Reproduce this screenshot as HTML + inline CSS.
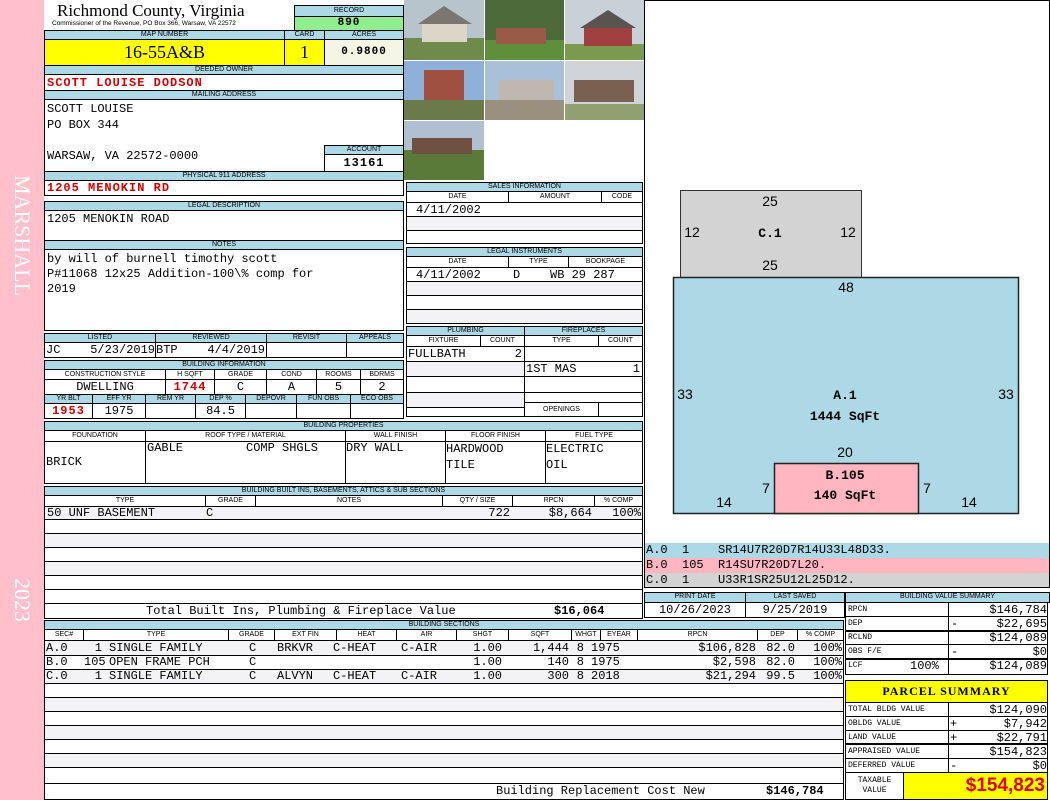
<!DOCTYPE html>
<html><head><meta charset="utf-8"><style>
*{margin:0;padding:0;box-sizing:border-box}
body{width:1050px;height:800px;position:relative;overflow:hidden;background:#fff;font-family:"Liberation Mono",monospace;font-size:12px;color:#000}
.a{position:absolute}
.b{position:absolute;border:1px solid #000}
.h{position:absolute;background:#add8e6;border:1px solid #000;font-family:"Liberation Sans",sans-serif;font-size:7px;text-align:center;line-height:8px;overflow:hidden;white-space:nowrap}
.s{position:absolute;background:#fff;border:1px solid #000;font-family:"Liberation Sans",sans-serif;font-size:7px;text-align:center;line-height:9px;overflow:hidden;white-space:nowrap}
.v{position:absolute;font-family:"Liberation Mono",monospace;font-size:12px;white-space:pre;line-height:14px;overflow:hidden}
.r{color:#d00000;font-weight:bold;letter-spacing:1px}
.g{background:#f3f3f5}
.t{position:absolute;font-size:12px;white-space:pre;line-height:14px;text-align:right}
.l{position:absolute;font-size:12px;white-space:pre;line-height:14px}
</style></head><body>
<div class="a" style="left:0;top:0;width:44px;height:800px;background:#ffc0cb"></div>
<div class="a" style="left:8px;top:175px;width:28px;height:160px;color:#fff;font-family:'Liberation Serif',serif;font-size:22px;writing-mode:vertical-rl;line-height:28px">MARSHALL</div>
<div class="a" style="left:8px;top:578px;width:28px;height:60px;color:#fff;font-family:'Liberation Serif',serif;font-size:22px;writing-mode:vertical-rl;line-height:28px">2023</div>

<div class="a" style="left:57px;top:1px;font-family:'Liberation Serif',serif;font-size:17px;line-height:20px">Richmond County, Virginia</div>
<div class="a" style="left:52px;top:20px;font-family:'Liberation Sans',sans-serif;font-size:6.5px;line-height:8px;white-space:nowrap">Commissioner of the Revenue, PO Box 366, Warsaw, VA 22572</div>
<div class="h" style="left:294px;top:5px;width:110px;height:12px;line-height:10px">RECORD</div>
<div class="a" style="left:294px;top:16px;width:110px;height:15px;background:#90ee90;border:1px solid #000;text-align:center;font-weight:bold;font-size:11px;line-height:13px;letter-spacing:1px">890</div>

<div class="h" style="left:44px;top:30px;width:241px;height:10px">MAP NUMBER</div>
<div class="h" style="left:284px;top:30px;width:41px;height:10px">CARD</div>
<div class="h" style="left:324px;top:30px;width:80px;height:10px">ACRES</div>
<div class="a" style="left:44px;top:39px;width:241px;height:27px;background:#ffff00;border:1px solid #000;text-align:center;font-family:'Liberation Serif',serif;font-size:18px;line-height:25px">16-55A&amp;B</div>
<div class="a" style="left:284px;top:39px;width:41px;height:27px;background:#ffff00;border:1px solid #000;text-align:center;font-family:'Liberation Serif',serif;font-size:18px;line-height:25px">1</div>
<div class="a" style="left:324px;top:39px;width:80px;height:27px;background:#f5f5e6;border:1px solid #000;text-align:center;font-weight:bold;font-size:11px;line-height:25px;letter-spacing:1px">0.9800</div>

<div class="h" style="left:44px;top:65px;width:360px;height:10px">DEEDED OWNER</div>
<div class="b" style="left:44px;top:74px;width:360px;height:17px"></div>
<div class="v r" style="left:47px;top:76px">SCOTT LOUISE DODSON</div>
<div class="h" style="left:44px;top:90px;width:360px;height:10px">MAILING ADDRESS</div>
<div class="b" style="left:44px;top:99px;width:360px;height:73px"></div>
<div class="v" style="left:47px;top:102px;line-height:15.5px">SCOTT LOUISE
PO BOX 344

WARSAW, VA 22572-0000</div>
<div class="h" style="left:324px;top:145px;width:80px;height:10px">ACCOUNT</div>
<div class="b" style="left:324px;top:154px;width:80px;height:18px;text-align:center;font-weight:bold;line-height:16px;letter-spacing:1px">13161</div>
<div class="h" style="left:44px;top:171px;width:360px;height:10px">PHYSICAL 911 ADDRESS</div>
<div class="b" style="left:44px;top:180px;width:360px;height:16px"></div>
<div class="v r" style="left:47px;top:181px">1205 MENOKIN RD</div>

<div class="h" style="left:44px;top:201px;width:360px;height:10px">LEGAL DESCRIPTION</div>
<div class="b" style="left:44px;top:210px;width:360px;height:31px"></div>
<div class="v" style="left:47px;top:212px">1205 MENOKIN ROAD</div>
<div class="h" style="left:44px;top:240px;width:360px;height:10px">NOTES</div>
<div class="b" style="left:44px;top:249px;width:360px;height:82px"></div>
<div class="v" style="left:47px;top:252px;line-height:15px">by will of burnell timothy scott
P#11068 12x25 Addition-100\% comp for
2019</div>

<div class="h" style="left:44px;top:333px;width:112px;height:10px">LISTED</div>
<div class="h" style="left:155px;top:333px;width:112px;height:10px">REVIEWED</div>
<div class="h" style="left:266px;top:333px;width:81px;height:10px">REVISIT</div>
<div class="h" style="left:346px;top:333px;width:58px;height:10px">APPEALS</div>
<div class="b" style="left:44px;top:342px;width:112px;height:16px"></div>
<div class="b" style="left:155px;top:342px;width:112px;height:16px"></div>
<div class="b" style="left:266px;top:342px;width:81px;height:16px"></div>
<div class="b" style="left:346px;top:342px;width:58px;height:16px"></div>
<div class="v" style="left:46px;top:343px">JC</div><div class="t" style="left:60px;top:343px;width:95px">5/23/2019</div>
<div class="v" style="left:156px;top:343px">BTP</div><div class="t" style="left:190px;top:343px;width:75px">4/4/2019</div>

<div class="h" style="left:44px;top:360px;width:360px;height:10px">BUILDING INFORMATION</div>
<div class="s" style="left:44px;top:369px;width:122px;height:11px">CONSTRUCTION STYLE</div>
<div class="s" style="left:165px;top:369px;width:50px;height:11px">H SQFT</div>
<div class="s" style="left:214px;top:369px;width:53px;height:11px">GRADE</div>
<div class="s" style="left:266px;top:369px;width:51px;height:11px">COND</div>
<div class="s" style="left:316px;top:369px;width:45px;height:11px">ROOMS</div>
<div class="s" style="left:360px;top:369px;width:44px;height:11px">BDRMS</div>
<div class="b" style="left:44px;top:379px;width:122px;height:16px;text-align:center;line-height:14px">DWELLING</div>
<div class="b r" style="left:165px;top:379px;width:50px;height:16px;text-align:center;line-height:14px">1744</div>
<div class="b" style="left:214px;top:379px;width:53px;height:16px;text-align:center;line-height:14px">C</div>
<div class="b" style="left:266px;top:379px;width:51px;height:16px;text-align:center;line-height:14px">A</div>
<div class="b" style="left:316px;top:379px;width:45px;height:16px;text-align:center;line-height:14px">5</div>
<div class="b" style="left:360px;top:379px;width:44px;height:16px;text-align:center;line-height:14px">2</div>
<div class="h" style="left:44px;top:394px;width:49px;height:10px">YR BLT</div>
<div class="h" style="left:92px;top:394px;width:54px;height:10px">EFF YR</div>
<div class="h" style="left:145px;top:394px;width:51px;height:10px">REM YR</div>
<div class="h" style="left:195px;top:394px;width:51px;height:10px">DEP %</div>
<div class="h" style="left:245px;top:394px;width:52px;height:10px">DEPOVR</div>
<div class="h" style="left:296px;top:394px;width:55px;height:10px">FUN OBS</div>
<div class="h" style="left:350px;top:394px;width:54px;height:10px">ECO OBS</div>
<div class="b r" style="left:44px;top:403px;width:49px;height:16px;text-align:center;line-height:14px">1953</div>
<div class="b" style="left:92px;top:403px;width:54px;height:16px;text-align:center;line-height:14px">1975</div>
<div class="b" style="left:145px;top:403px;width:51px;height:16px"></div>
<div class="b" style="left:195px;top:403px;width:51px;height:16px;text-align:center;line-height:14px">84.5</div>
<div class="b" style="left:245px;top:403px;width:52px;height:16px"></div>
<div class="b" style="left:296px;top:403px;width:55px;height:16px"></div>
<div class="b" style="left:350px;top:403px;width:54px;height:16px"></div>

<svg class="a" style="left:404px;top:0" width="240" height="180">
<rect x="0" y="0" width="80" height="60" fill="#b8c4cc"/><rect x="0" y="38" width="80" height="22" fill="#6f8a4a"/><rect x="18" y="22" width="45" height="20" fill="#ddd6c8"/><polygon points="14,24 40,6 68,24" fill="#7c7670"/>
<rect x="81" y="0" width="79" height="60" fill="#4c6a3a"/><rect x="81" y="40" width="79" height="20" fill="#5f8f3a"/><rect x="92" y="28" width="50" height="16" fill="#9a5a48"/>
<rect x="161" y="0" width="79" height="60" fill="#c8d0d8"/><rect x="161" y="44" width="79" height="16" fill="#7a9a50"/><rect x="180" y="26" width="48" height="20" fill="#a04040"/><polygon points="176,28 204,10 232,28" fill="#5a5450"/>
<rect x="0" y="61" width="80" height="59" fill="#8fb0d8"/><rect x="20" y="70" width="40" height="40" fill="#a05040"/><rect x="0" y="100" width="80" height="20" fill="#6a7a4a"/>
<rect x="81" y="61" width="79" height="59" fill="#a8c0d8"/><rect x="95" y="80" width="55" height="20" fill="#c0b8b0"/><rect x="81" y="100" width="79" height="20" fill="#9a9080"/>
<rect x="161" y="61" width="79" height="59" fill="#d0d4d8"/><rect x="170" y="80" width="60" height="22" fill="#7a6050"/><rect x="161" y="104" width="79" height="16" fill="#90a070"/>
<rect x="0" y="121" width="80" height="59" fill="#b0c0d0"/><rect x="0" y="150" width="80" height="30" fill="#5a7a3a"/><rect x="8" y="138" width="60" height="16" fill="#705040"/>
</svg>

<div class="h" style="left:406px;top:182px;width:237px;height:10px">SALES INFORMATION</div>
<div class="s" style="left:406px;top:191px;width:103px;height:12px">DATE</div>
<div class="s" style="left:508px;top:191px;width:94px;height:12px">AMOUNT</div>
<div class="s" style="left:601px;top:191px;width:42px;height:12px">CODE</div>
<div class="b" style="left:406px;top:202px;width:237px;height:15px"></div>
<div class="b g" style="left:406px;top:216px;width:237px;height:15px"></div>
<div class="b" style="left:406px;top:230px;width:237px;height:14px"></div>
<div class="v" style="left:416px;top:203px">4/11/2002</div>

<div class="h" style="left:406px;top:247px;width:237px;height:10px">LEGAL INSTRUMENTS</div>
<div class="s" style="left:406px;top:256px;width:103px;height:12px">DATE</div>
<div class="s" style="left:508px;top:256px;width:61px;height:12px">TYPE</div>
<div class="s" style="left:568px;top:256px;width:75px;height:12px">BOOKPAGE</div>
<div class="b" style="left:406px;top:267px;width:237px;height:15px"></div>
<div class="b g" style="left:406px;top:281px;width:237px;height:15px"></div>
<div class="b" style="left:406px;top:295px;width:237px;height:15px"></div>
<div class="b g" style="left:406px;top:309px;width:237px;height:15px"></div>
<div class="v" style="left:416px;top:268px">4/11/2002</div><div class="v" style="left:513px;top:268px">D</div><div class="v" style="left:550px;top:268px">WB 29 287</div>

<div class="h" style="left:406px;top:326px;width:119px;height:10px">PLUMBING</div>
<div class="h" style="left:524px;top:326px;width:119px;height:10px">FIREPLACES</div>
<div class="s" style="left:406px;top:335px;width:75px;height:12px">FIXTURE</div>
<div class="s" style="left:480px;top:335px;width:45px;height:12px">COUNT</div>
<div class="s" style="left:524px;top:335px;width:75px;height:12px">TYPE</div>
<div class="s" style="left:598px;top:335px;width:45px;height:12px">COUNT</div>
<div class="b" style="left:406px;top:346px;width:119px;height:71px"></div>
<div class="a" style="left:407px;top:361px;width:117px;height:1px;background:#000"></div>
<div class="a g" style="left:407px;top:362px;width:117px;height:14px"></div>
<div class="a" style="left:407px;top:376px;width:117px;height:1px;background:#000"></div>
<div class="a" style="left:407px;top:392px;width:117px;height:1px;background:#000"></div>
<div class="a g" style="left:407px;top:393px;width:117px;height:14px"></div>
<div class="a" style="left:407px;top:407px;width:117px;height:1px;background:#000"></div>
<div class="b" style="left:524px;top:346px;width:119px;height:71px"></div>
<div class="a" style="left:525px;top:361px;width:117px;height:1px;background:#000"></div>
<div class="a" style="left:525px;top:376px;width:117px;height:1px;background:#000"></div>
<div class="a" style="left:525px;top:392px;width:117px;height:1px;background:#000"></div>
<div class="a" style="left:525px;top:402px;width:117px;height:1px;background:#000"></div>
<div class="a" style="left:598px;top:402px;width:1px;height:14px;background:#000"></div>
<div class="a" style="left:525px;top:403px;width:73px;height:13px;font-family:'Liberation Sans',sans-serif;font-size:7px;text-align:center;line-height:13px">OPENINGS</div>
<div class="v" style="left:408px;top:347px">FULLBATH</div><div class="t" style="left:480px;top:347px;width:42px">2</div>
<div class="v" style="left:526px;top:362px">1ST MAS</div><div class="t" style="left:598px;top:362px;width:42px">1</div>

<div class="h" style="left:44px;top:421px;width:599px;height:10px">BUILDING PROPERTIES</div>
<div class="s" style="left:44px;top:430px;width:102px;height:12px">FOUNDATION</div>
<div class="s" style="left:145px;top:430px;width:201px;height:12px">ROOF TYPE / MATERIAL</div>
<div class="s" style="left:345px;top:430px;width:101px;height:12px">WALL FINISH</div>
<div class="s" style="left:445px;top:430px;width:101px;height:12px">FLOOR FINISH</div>
<div class="s" style="left:545px;top:430px;width:98px;height:12px">FUEL TYPE</div>
<div class="b" style="left:44px;top:441px;width:102px;height:43px"></div>
<div class="b" style="left:145px;top:441px;width:201px;height:43px"></div>
<div class="b" style="left:345px;top:441px;width:101px;height:43px"></div>
<div class="b" style="left:445px;top:441px;width:101px;height:43px"></div>
<div class="b" style="left:545px;top:441px;width:98px;height:43px"></div>
<div class="v" style="left:46px;top:455px">BRICK</div>
<div class="v" style="left:147px;top:441px">GABLE</div><div class="v" style="left:246px;top:441px">COMP SHGLS</div>
<div class="v" style="left:346px;top:441px">DRY WALL</div>
<div class="v" style="left:446px;top:441px;line-height:16px">HARDWOOD
TILE</div>
<div class="v" style="left:546px;top:441px;line-height:16px">ELECTRIC
OIL</div>

<div class="h" style="left:44px;top:486px;width:599px;height:10px">BUILDING BUILT INS, BASEMENTS, ATTICS &amp; SUB SECTIONS</div>
<div class="s" style="left:44px;top:495px;width:162px;height:12px">TYPE</div>
<div class="s" style="left:205px;top:495px;width:51px;height:12px">GRADE</div>
<div class="s" style="left:255px;top:495px;width:188px;height:12px">NOTES</div>
<div class="s" style="left:442px;top:495px;width:71px;height:12px">QTY / SIZE</div>
<div class="s" style="left:512px;top:495px;width:83px;height:12px">RPCN</div>
<div class="s" style="left:594px;top:495px;width:49px;height:12px">% COMP</div>
<div class="b" style="left:44px;top:506px;width:599px;height:113px"></div>
<div class="a g" style="left:45px;top:507px;width:597px;height:12px"></div>
<div class="a" style="left:45px;top:519px;width:597px;height:1px;background:#000"></div>
<div class="a" style="left:45px;top:533px;width:597px;height:1px;background:#000"></div>
<div class="a g" style="left:45px;top:534px;width:597px;height:13px"></div>
<div class="a" style="left:45px;top:547px;width:597px;height:1px;background:#000"></div>
<div class="a" style="left:45px;top:561px;width:597px;height:1px;background:#000"></div>
<div class="a g" style="left:45px;top:562px;width:597px;height:13px"></div>
<div class="a" style="left:45px;top:575px;width:597px;height:1px;background:#000"></div>
<div class="a" style="left:45px;top:589px;width:597px;height:1px;background:#000"></div>
<div class="a" style="left:45px;top:603px;width:597px;height:1px;background:#000"></div>
<div class="v" style="left:47px;top:506px">50 UNF BASEMENT</div><div class="v" style="left:206px;top:506px">C</div>
<div class="t" style="left:440px;top:506px;width:70px">722</div>
<div class="t" style="left:512px;top:506px;width:80px">$8,664</div>
<div class="t" style="left:594px;top:506px;width:47px">100%</div>
<div class="v" style="left:146px;top:604px">Total Built Ins, Plumbing &amp; Fireplace Value</div>
<div class="v" style="left:554px;top:604px;font-weight:bold">$16,064</div>

<div class="h" style="left:44px;top:620px;width:800px;height:10px">BUILDING SECTIONS</div>
<div class="s" style="left:44px;top:629px;width:40px;height:12px">SEC#</div>
<div class="s" style="left:83px;top:629px;width:146px;height:12px">TYPE</div>
<div class="s" style="left:228px;top:629px;width:47px;height:12px">GRADE</div>
<div class="s" style="left:274px;top:629px;width:63px;height:12px">EXT FIN</div>
<div class="s" style="left:336px;top:629px;width:61px;height:12px">HEAT</div>
<div class="s" style="left:396px;top:629px;width:61px;height:12px">AIR</div>
<div class="s" style="left:456px;top:629px;width:53px;height:12px">SHGT</div>
<div class="s" style="left:508px;top:629px;width:64px;height:12px">SQFT</div>
<div class="s" style="left:571px;top:629px;width:30px;height:12px">WHGT</div>
<div class="s" style="left:600px;top:629px;width:38px;height:12px">EYEAR</div>
<div class="s" style="left:637px;top:629px;width:121px;height:12px">RPCN</div>
<div class="s" style="left:757px;top:629px;width:41px;height:12px">DEP</div>
<div class="s" style="left:797px;top:629px;width:47px;height:12px">% COMP</div>
<div class="b" style="left:44px;top:640px;width:800px;height:160px"></div>
<div class="a g" style="left:45px;top:641px;width:798px;height:14px"></div>
<div class="a g" style="left:45px;top:669px;width:798px;height:14px"></div>
<div class="a g" style="left:45px;top:697px;width:798px;height:14px"></div>
<div class="a g" style="left:45px;top:725px;width:798px;height:14px"></div>
<div class="a g" style="left:45px;top:753px;width:798px;height:14px"></div>
<div class="a" style="left:45px;top:655px;width:798px;height:1px;background:#000"></div>
<div class="a" style="left:45px;top:669px;width:798px;height:1px;background:#000"></div>
<div class="a" style="left:45px;top:683px;width:798px;height:1px;background:#000"></div>
<div class="a" style="left:45px;top:697px;width:798px;height:1px;background:#000"></div>
<div class="a" style="left:45px;top:711px;width:798px;height:1px;background:#000"></div>
<div class="a" style="left:45px;top:725px;width:798px;height:1px;background:#000"></div>
<div class="a" style="left:45px;top:739px;width:798px;height:1px;background:#000"></div>
<div class="a" style="left:45px;top:753px;width:798px;height:1px;background:#000"></div>
<div class="a" style="left:45px;top:767px;width:798px;height:1px;background:#000"></div>
<div class="a" style="left:45px;top:783px;width:798px;height:1px;background:#000"></div>
<div class="l" style="left:46px;top:641px;line-height:14px">A.0
B.0
C.0</div>
<div class="t" style="left:84px;top:641px;width:18px">1
105
1</div>
<div class="l" style="left:109px;top:641px">SINGLE FAMILY
OPEN FRAME PCH
SINGLE FAMILY</div>
<div class="l" style="left:249px;top:641px">C
C
C</div>
<div class="l" style="left:277px;top:641px">BRKVR

ALVYN</div>
<div class="l" style="left:333px;top:641px">C-HEAT

C-HEAT</div>
<div class="l" style="left:401px;top:641px">C-AIR

C-AIR</div>
<div class="t" style="left:458px;top:641px;width:44px">1.00
1.00
1.00</div>
<div class="t" style="left:510px;top:641px;width:59px">1,444
140
300</div>
<div class="t" style="left:572px;top:641px;width:12px">8
8
8</div>
<div class="l" style="left:591px;top:641px">1975
1975
2018</div>
<div class="t" style="left:640px;top:641px;width:116px">$106,828
$2,598
$21,294</div>
<div class="t" style="left:758px;top:641px;width:37px">82.0
82.0
99.5</div>
<div class="t" style="left:798px;top:641px;width:44px">100%
100%
100%</div>
<div class="v" style="left:496px;top:784px">Building Replacement Cost New</div>
<div class="v" style="left:766px;top:784px;font-weight:bold">$146,784</div>

<div class="b" style="left:644px;top:0;width:406px;height:544px"></div>
<svg class="a" style="left:644px;top:0" width="406" height="544" font-family="Liberation Sans, sans-serif" font-size="14">
<rect x="36.5" y="190.5" width="181" height="87" fill="#d3d3d3" stroke="#333"/>
<rect x="29.5" y="277.5" width="345" height="236" fill="#add8e6" stroke="#222" stroke-width="1.5"/>
<rect x="130.5" y="463.5" width="144" height="50" fill="#ffb6c1" stroke="#222" stroke-width="1.5"/>
<g text-anchor="middle">
<text x="126" y="206">25</text><text x="126" y="270">25</text><text x="48" y="237">12</text><text x="204" y="237">12</text>
<text x="202" y="292">48</text><text x="41" y="399">33</text><text x="362" y="399">33</text><text x="201" y="457">20</text>
<text x="80" y="507">14</text><text x="325" y="507">14</text><text x="122" y="493">7</text><text x="283" y="493">7</text>
<g font-family="Liberation Mono, monospace" font-weight="bold" font-size="13">
<text x="126" y="237">C.1</text><text x="201" y="399">A.1</text><text x="201" y="420">1444 SqFt</text>
<text x="201" y="479">B.105</text><text x="201" y="499">140 SqFt</text></g></g>
</svg>
<div class="a" style="left:644px;top:543px;width:406px;height:15px;background:#add8e6"></div>
<div class="a" style="left:644px;top:558px;width:406px;height:15px;background:#ffb6c1"></div>
<div class="a" style="left:644px;top:573px;width:406px;height:15px;background:#d3d3d3"></div>
<div class="b" style="left:644px;top:543px;width:406px;height:45px;border-top:none"></div>
<div class="v" style="left:646px;top:543px;line-height:15px">A.0  1    SR14U7R20D7R14U33L48D33.
B.0  105  R14SU7R20D7L20.
C.0  1    U33R1SR25U12L25D12.</div>

<div class="h" style="left:644px;top:592px;width:102px;height:11px">PRINT DATE</div>
<div class="h" style="left:745px;top:592px;width:100px;height:11px">LAST SAVED</div>
<div class="b" style="left:644px;top:602px;width:102px;height:16px;text-align:center;line-height:14px">10/26/2023</div>
<div class="b" style="left:745px;top:602px;width:100px;height:16px;text-align:center;line-height:14px">9/25/2019</div>

<div class="h" style="left:845px;top:592px;width:205px;height:11px">BUILDING VALUE SUMMARY</div>
<div class="b" style="left:845px;top:602px;width:104px;height:73px"></div>
<div class="b" style="left:948px;top:602px;width:100px;height:73px"></div>
<div class="a" style="left:846px;top:616px;width:202px;height:1px;background:#000"></div>
<div class="a" style="left:846px;top:630px;width:202px;height:2px;background:#000"></div>
<div class="a" style="left:846px;top:644px;width:202px;height:1px;background:#000"></div>
<div class="a" style="left:846px;top:658px;width:202px;height:2px;background:#000"></div>
<div class="v" style="left:848px;top:603px;font-size:8px;line-height:14px">RPCN
DEP
RCLND
OBS F/E
LCF</div>
<div class="v" style="left:910px;top:659px">100%</div>
<div class="v" style="left:950px;top:603px;width:97px;text-align:right;line-height:14px">$146,784
$22,695
$124,089
$0
$124,089</div>
<div class="v" style="left:951px;top:617px">-</div>
<div class="v" style="left:951px;top:645px">-</div>

<div class="b" style="left:845px;top:680px;width:203px;height:23px;background:#ffff00;text-align:center;font-family:'Liberation Serif',serif;font-weight:bold;font-size:12px;line-height:21px;letter-spacing:1px">PARCEL SUMMARY</div>
<div class="b" style="left:845px;top:702px;width:104px;height:71px"></div>
<div class="b" style="left:948px;top:702px;width:100px;height:71px"></div>
<div class="a" style="left:846px;top:716px;width:202px;height:1px;background:#000"></div>
<div class="a" style="left:846px;top:730px;width:202px;height:1px;background:#000"></div>
<div class="a" style="left:846px;top:743px;width:202px;height:2px;background:#000"></div>
<div class="a" style="left:846px;top:758px;width:202px;height:1px;background:#000"></div>
<div class="v" style="left:848px;top:703px;font-size:8px;line-height:14px">TOTAL BLDG VALUE
OBLDG VALUE
LAND VALUE
APPRAISED VALUE
DEFERRED VALUE</div>
<div class="v" style="left:950px;top:703px;width:97px;text-align:right;line-height:14px">$124,090
$7,942
$22,791
$154,823
$0</div>
<div class="v" style="left:950px;top:717px">+</div>
<div class="v" style="left:950px;top:731px">+</div>
<div class="v" style="left:950px;top:759px">-</div>
<div class="b" style="left:845px;top:772px;width:59px;height:28px;font-size:8px;line-height:10px;text-align:center;padding-top:3px">TAXABLE<br>VALUE</div>
<div class="b" style="left:903px;top:772px;width:145px;height:28px;background:#ffff00;text-align:right;color:#e00000;font-family:'Liberation Sans',sans-serif;font-weight:bold;font-size:19px;line-height:26px;padding-right:2px">$154,823</div>
</body></html>
